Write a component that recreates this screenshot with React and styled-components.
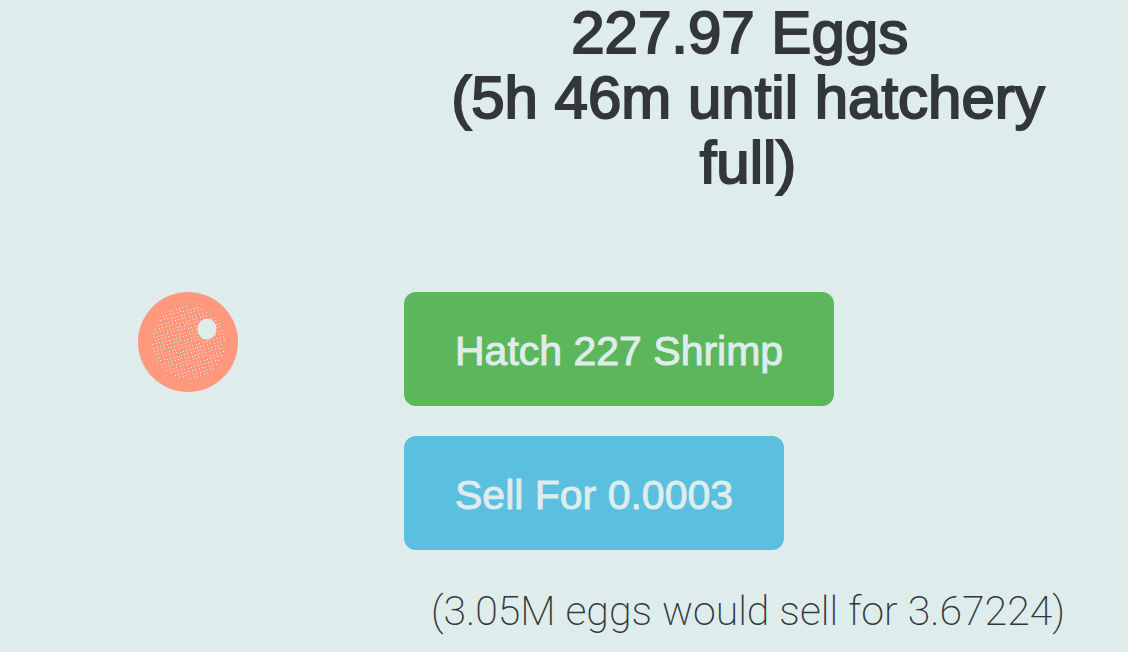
import React from "react";
import styled, { createGlobalStyle } from "styled-components";

const GlobalStyle = createGlobalStyle`
  *, *::before, *::after { box-sizing: border-box; }
  body {
    margin: 0;
    background: #deecec;
    color: #333739;
    font-family: "Liberation Sans", Arial, sans-serif;
  }
`;

const Page = styled.main`
  display: grid;
  grid-template-columns: minmax(0, 368fr) minmax(0, 688fr);
  column-gap: 36px;
  padding-right: 36px;
`;

const EggColumn = styled.div`
  display: flex;
  justify-content: center;
  padding: 292px 0 0 8px;
`;

const Egg = styled.svg`
  width: 100px;
  height: 100px;
`;

const Details = styled.section`
  display: flex;
  flex-direction: column;
  align-items: flex-start;
`;

const Heading = styled.h1`
  width: 100%;
  margin: 0 0 97px;
  font-size: 60px;
  font-weight: 400;
  line-height: 65px;
  text-align: center;
  -webkit-text-stroke: 2px currentColor;
`;

const Action = styled.button`
  height: 114px;
  margin-bottom: 30px;
  padding: 4px 51px 0;
  border: 0;
  border-radius: 12px;
  background: ${({ $color }) => $color};
  color: #deecec;
  font-family: inherit;
  font-size: 41px;
  line-height: 60px;
  -webkit-text-stroke: 1px currentColor;
`;

const Note = styled.p`
  width: 100%;
  margin: 0;
  font-family: Roboto, "Liberation Sans", sans-serif;
  font-size: 41px;
  font-weight: 200;
  line-height: 62px;
  text-align: center;
`;

const speckles = [];
for (let row = -11; row <= 11; row += 1) {
  for (let col = -11; col <= 11; col += 1) {
    const x = Math.round(50 + col * 3.4 + row * 0.9);
    const y = Math.round(50 + row * 3.4 - col * 0.9);
    if (Math.hypot(x - 50, y - 50) < 37) speckles.push([x, y]);
  }
}

export default function App() {
  return (
    <>
      <GlobalStyle />
      <Page>
        <EggColumn>
          <Egg viewBox="0 0 100 100" role="img" aria-label="Shrimp egg">
            <circle cx="50" cy="50" r="50" fill="#ff987d" />
            <g fill="#deecec" shapeRendering="crispEdges">
              {speckles.map(([x, y]) => (
                <rect key={`${x}-${y}`} x={x} y={y} width="1" height="1" />
              ))}
            </g>
            <ellipse cx="69" cy="37" rx="9.5" ry="10.5" fill="#deecec" />
          </Egg>
        </EggColumn>
        <Details>
          <Heading>
            227.97 Eggs&nbsp;
            <br />
            (5h 46m until hatchery full)
          </Heading>
          <Action type="button" $color="#5cb75c">Hatch 227 Shrimp</Action>
          <Action type="button" $color="#5bbfe0">Sell For 0.0003</Action>
          <Note>(3.05M eggs would sell for 3.67224)</Note>
        </Details>
      </Page>
    </>
  );
}
